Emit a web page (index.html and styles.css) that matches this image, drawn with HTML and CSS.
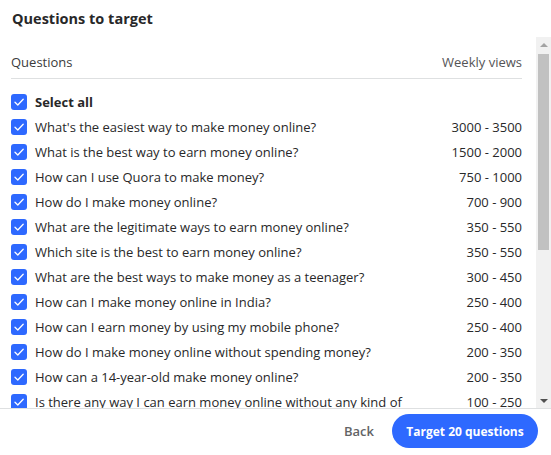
FILE: index.html
```html
<!DOCTYPE html>
<html>
<head>
<meta charset="utf-8">
<link rel="stylesheet" href="styles.css">
</head>
<body>
<div class="modal">
  <div class="title">Questions to target</div>
  <div class="scroll">
    <div class="viewport">
    <div class="list">
      <div class="head"><span>Questions</span><span class="wv">Weekly views</span></div>
      <label class="row all"><span class="cb"><svg viewBox="0 0 16 16"><path d="M4 8.3 L6.8 11 L12.2 5.2"/></svg></span><span class="q">Select all</span><span class="v"></span></label>
      <label class="row"><span class="cb"><svg viewBox="0 0 16 16"><path d="M4 8.3 L6.8 11 L12.2 5.2"/></svg></span><span class="q">What's the easiest way to make money online?</span><span class="v">3000 - 3500</span></label>
      <label class="row"><span class="cb"><svg viewBox="0 0 16 16"><path d="M4 8.3 L6.8 11 L12.2 5.2"/></svg></span><span class="q">What is the best way to earn money online?</span><span class="v">1500 - 2000</span></label>
      <label class="row"><span class="cb"><svg viewBox="0 0 16 16"><path d="M4 8.3 L6.8 11 L12.2 5.2"/></svg></span><span class="q">How can I use Quora to make money?</span><span class="v">750 - 1000</span></label>
      <label class="row"><span class="cb"><svg viewBox="0 0 16 16"><path d="M4 8.3 L6.8 11 L12.2 5.2"/></svg></span><span class="q">How do I make money online?</span><span class="v">700 - 900</span></label>
      <label class="row"><span class="cb"><svg viewBox="0 0 16 16"><path d="M4 8.3 L6.8 11 L12.2 5.2"/></svg></span><span class="q">What are the legitimate ways to earn money online?</span><span class="v">350 - 550</span></label>
      <label class="row"><span class="cb"><svg viewBox="0 0 16 16"><path d="M4 8.3 L6.8 11 L12.2 5.2"/></svg></span><span class="q">Which site is the best to earn money online?</span><span class="v">350 - 550</span></label>
      <label class="row"><span class="cb"><svg viewBox="0 0 16 16"><path d="M4 8.3 L6.8 11 L12.2 5.2"/></svg></span><span class="q">What are the best ways to make money as a teenager?</span><span class="v">300 - 450</span></label>
      <label class="row"><span class="cb"><svg viewBox="0 0 16 16"><path d="M4 8.3 L6.8 11 L12.2 5.2"/></svg></span><span class="q">How can I make money online in India?</span><span class="v">250 - 400</span></label>
      <label class="row"><span class="cb"><svg viewBox="0 0 16 16"><path d="M4 8.3 L6.8 11 L12.2 5.2"/></svg></span><span class="q">How can I earn money by using my mobile phone?</span><span class="v">250 - 400</span></label>
      <label class="row"><span class="cb"><svg viewBox="0 0 16 16"><path d="M4 8.3 L6.8 11 L12.2 5.2"/></svg></span><span class="q">How do I make money online without spending money?</span><span class="v">200 - 350</span></label>
      <label class="row"><span class="cb"><svg viewBox="0 0 16 16"><path d="M4 8.3 L6.8 11 L12.2 5.2"/></svg></span><span class="q">How can a 14-year-old make money online?</span><span class="v">200 - 350</span></label>
      <label class="row"><span class="cb"><svg viewBox="0 0 16 16"><path d="M4 8.3 L6.8 11 L12.2 5.2"/></svg></span><span class="q">Is there any way I can earn money online without any kind of</span><span class="v">100 - 250</span></label>
    </div>
    </div>
    <div class="sbar">
      <div class="sbtn"><span class="arrow up"></span></div>
      <div class="thumb"></div>
      <div class="sbtn down"><span class="arrow dn"></span></div>
    </div>
  </div>
  <div class="footer">
    <button class="back">Back</button>
    <button class="primary">Target 20 questions</button>
  </div>
</div>
</body>
</html>
```
FILE: styles.css
```css
* { box-sizing: border-box; }
html, body { margin: 0; padding: 0; background: #fff; }
body {
  font-family: "Segoe UI", "Open Sans", "Noto Sans", sans-serif;
  color: #282829;
  width: 551px;
  height: 455px;
  overflow: hidden;
}
.modal { display: flex; flex-direction: column; height: 455px; }
.title {
  font-size: 14.5px;
  font-weight: 700;
  padding: 7px 12px 0;
  height: 37px;
  line-height: 24px;
}
.scroll {
  height: 372px;
  display: flex;
  border-bottom: 1px solid #dee0e1;
}
.viewport { flex: 1; overflow: hidden; }
.sbar {
  width: 15px;
  flex: none;
  background: #f1f1f1;
  display: flex;
  flex-direction: column;
}
.sbtn {
  height: 15px;
  display: flex;
  align-items: center;
  justify-content: center;
}
.sbtn.down { margin-top: auto; }
.arrow { width: 0; height: 0; border-left: 4px solid transparent; border-right: 4px solid transparent; }
.arrow.up { border-bottom: 4px solid #a3a3a3; }
.arrow.dn { border-top: 4px solid #505050; }
.thumb {
  margin: 2px 2px 0;
  height: 196px;
  background: #c1c1c1;
}
.list { padding: 0 14px 0 11px; }
.head {
  display: flex;
  justify-content: space-between;
  font-size: 13px;
  color: #3b3b3c;
  padding: 15px 0 6px;
  line-height: 20px;
  border-bottom: 1px solid #dee0e1;
  margin-bottom: 11px;
}
.wv { color: #545456; }
.row {
  display: flex;
  align-items: flex-start;
  font-size: 13px;
  line-height: 20px;
  padding: 2px 0 3px;
}
.cb {
  flex: none;
  width: 16px;
  height: 16px;
  border-radius: 3px;
  background: #2e69ff;
  margin: 2px 8px 0 0;
  display: flex;
}
.cb svg { width: 16px; height: 16px; }
.cb path { fill: none; stroke: #fff; stroke-width: 1.3; stroke-linecap: round; stroke-linejoin: round; }
.q { width: 375px; color: #282829; }
.all .q { font-weight: 700; }
.v { flex: 1; text-align: right; color: #282829; }
.footer {
  flex: 1;
  display: flex;
  justify-content: flex-end;
  align-items: center;
  padding: 0 13px 2px 0;
}
button {
  font-family: inherit;
  border: none;
  background: none;
  cursor: pointer;
}
.back {
  font-size: 13px;
  font-weight: 600;
  color: #636466;
  padding: 0 18px;
  height: 34px;
}
.primary {
  background: #2e69ff;
  color: #fff;
  font-size: 12px;
  font-weight: 700;
  height: 34px;
  width: 146px;
  border-radius: 17px;
}
```
